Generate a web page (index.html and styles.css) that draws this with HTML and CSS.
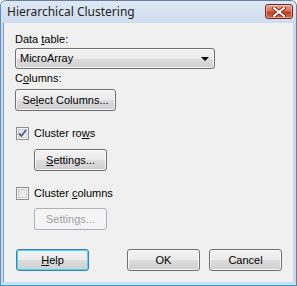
FILE: index.html
```html
<!DOCTYPE html>
<html lang="en">
<head>
    <meta charset="UTF-8">
    <title>Hierarchical Clustering</title>
    <link rel="stylesheet" href="styles.css">
</head>
<body>
    <div class="window">
        <!-- Title bar -->
        <div class="titlebar">
            <span class="title">Hierarchical Clustering</span>
            <button class="close" type="button" aria-label="Close">
                <svg width="14" height="10" viewBox="0 0 14 10">
                    <path d="M2 1 L12 9 M12 1 L2 9" stroke="#7a1d10" stroke-width="3.6" stroke-linecap="square"/>
                    <path d="M2 1 L12 9 M12 1 L2 9" stroke="#ffffff" stroke-width="2" stroke-linecap="square"/>
                </svg>
            </button>
        </div>

        <main class="content">
            <div class="label first">Data <u>t</u>able:</div>
            <div class="combo">
                <span>MicroArray</span>
                <span class="arrow"></span>
            </div>

            <div class="label second">C<u>o</u>lumns:</div>
            <button class="btn select-btn" type="button">Se<u>l</u>ect Columns...</button>

            <label class="check-row">
                <span class="checkbox checked">
                    <svg width="9" height="9" viewBox="0 0 9 9">
                        <path d="M1 4.5 L3.5 7 L8 1" fill="none" stroke="#4a5f97" stroke-width="1.8"/>
                    </svg>
                </span>
                <span>Cluster ro<u>w</u>s</span>
            </label>
            <button class="btn settings-btn" type="button"><u>S</u>ettings...</button>

            <label class="check-row">
                <span class="checkbox"></span>
                <span>Cluster <u>c</u>olumns</span>
            </label>
            <button class="btn settings-btn disabled" type="button" disabled>Settin<u>g</u>s...</button>

            <div class="footer">
                <button class="btn focused" type="button"><u>H</u>elp</button>
                <div class="footer-right">
                    <button class="btn" type="button">OK</button>
                    <button class="btn" type="button">Cancel</button>
                </div>
            </div>
        </main>
    </div>
</body>
</html>
```

FILE: styles.css
```css
:root {
    --frame: #cdd9e8;
    --panel: #f0f0f0;
    --text: #000;
    --btn-border: #707070;
}

* {
    margin: 0;
    padding: 0;
    box-sizing: border-box;
}

body {
    font-family: 'Liberation Sans', Arial, sans-serif;
    font-size: 11px;
    line-height: 13px;
    color: var(--text);
    background: #ffffff;
}

.window {
    width: 297px;
    height: 286px;
    display: flex;
    flex-direction: column;
    background: var(--frame);
    border: 1px solid #6a7f9c;
    border-bottom-color: #2f9fdc;
    border-left-color: #5c8fc4;
    border-radius: 6px 6px 0 0;
    padding: 0 3px 3px 2px;
    box-shadow: inset 0 -2px 0 #bfe6f8;
}

/* Title bar */
.titlebar {
    height: 22px;
    display: flex;
    align-items: flex-start;
    justify-content: space-between;
    background: linear-gradient(#dde8f5, #cfdced);
    margin: 0 -3px 0 -2px;
    padding: 3px 3px 0 6px;
    border-radius: 5px 5px 0 0;
}

.title {
    font-family: 'Noto Sans', 'Liberation Sans', sans-serif;
    font-size: 12px;
    line-height: 16px;
    color: #1e1e1e;
}

.close {
    width: 28px;
    height: 15px;
    display: flex;
    align-items: center;
    justify-content: center;
    border: 1px solid #6d2a22;
    border-radius: 3px;
    background: linear-gradient(#e4a595 0%, #d5725e 45%, #c43e22 55%, #d06a4f 100%);
    box-shadow: inset 0 0 0 1px rgba(255, 220, 210, 0.5);
}

/* Dialog body */
.content {
    flex: 1;
    background: var(--panel);
    border-left: 1px solid #8a9bb0;
    padding: 10px 11px 0 11px;
    display: flex;
    flex-direction: column;
    align-items: flex-start;
}

.label.second {
    margin-top: 3px;
}

.combo {
    width: 200px;
    height: 21px;
    margin-top: 2px;
    display: flex;
    align-items: center;
    justify-content: space-between;
    padding: 0 5px 0 4px;
    border: 1px solid var(--btn-border);
    border-radius: 3px;
    background: linear-gradient(#f2f2f2 0%, #ebebeb 50%, #dddddd 51%, #cfcfcf 100%);
    box-shadow: inset 0 0 0 1px rgba(255, 255, 255, 0.7);
}

.arrow {
    width: 0;
    height: 0;
    border-left: 4px solid transparent;
    border-right: 4px solid transparent;
    border-top: 4px solid #000;
    margin-top: 1px;
}

.btn {
    font-family: inherit;
    font-size: 11px;
    line-height: 13px;
    color: var(--text);
    width: 73px;
    height: 22px;
    border: 1px solid var(--btn-border);
    border-radius: 3px;
    background: linear-gradient(#f2f2f2 0%, #ebebeb 50%, #dddddd 51%, #cfcfcf 100%);
    box-shadow: inset 0 0 0 1px rgba(255, 255, 255, 0.75);
}

.select-btn {
    width: 101px;
    margin-top: 4px;
}

.check-row {
    display: flex;
    align-items: center;
    gap: 5px;
    margin-top: 16px;
    margin-left: 1px;
    height: 13px;
}

.checkbox {
    width: 13px;
    height: 13px;
    border: 1px solid #8e8f8f;
    background: linear-gradient(135deg, #dcdcdc, #f8f8f8);
    box-shadow: inset 0 0 0 1px #f4f4f4, inset 0 0 0 2px #cfcfcf;
    display: flex;
    align-items: center;
    justify-content: center;
}

.settings-btn {
    margin-top: 9px;
    margin-left: 19px;
}

.settings-btn.disabled {
    margin-top: 8px;
    color: #a0a0a0;
    border-color: #adb2b5;
    background: #f4f4f4;
    box-shadow: none;
}

.btn.focused {
    border-color: #3c7fb1;
    box-shadow: inset 0 0 0 1px #48d8fb;
}

.footer {
    width: 100%;
    margin-top: 19px;
    padding-left: 1px;
    display: flex;
    justify-content: space-between;
}

.footer-right {
    display: flex;
    gap: 9px;
}
```
